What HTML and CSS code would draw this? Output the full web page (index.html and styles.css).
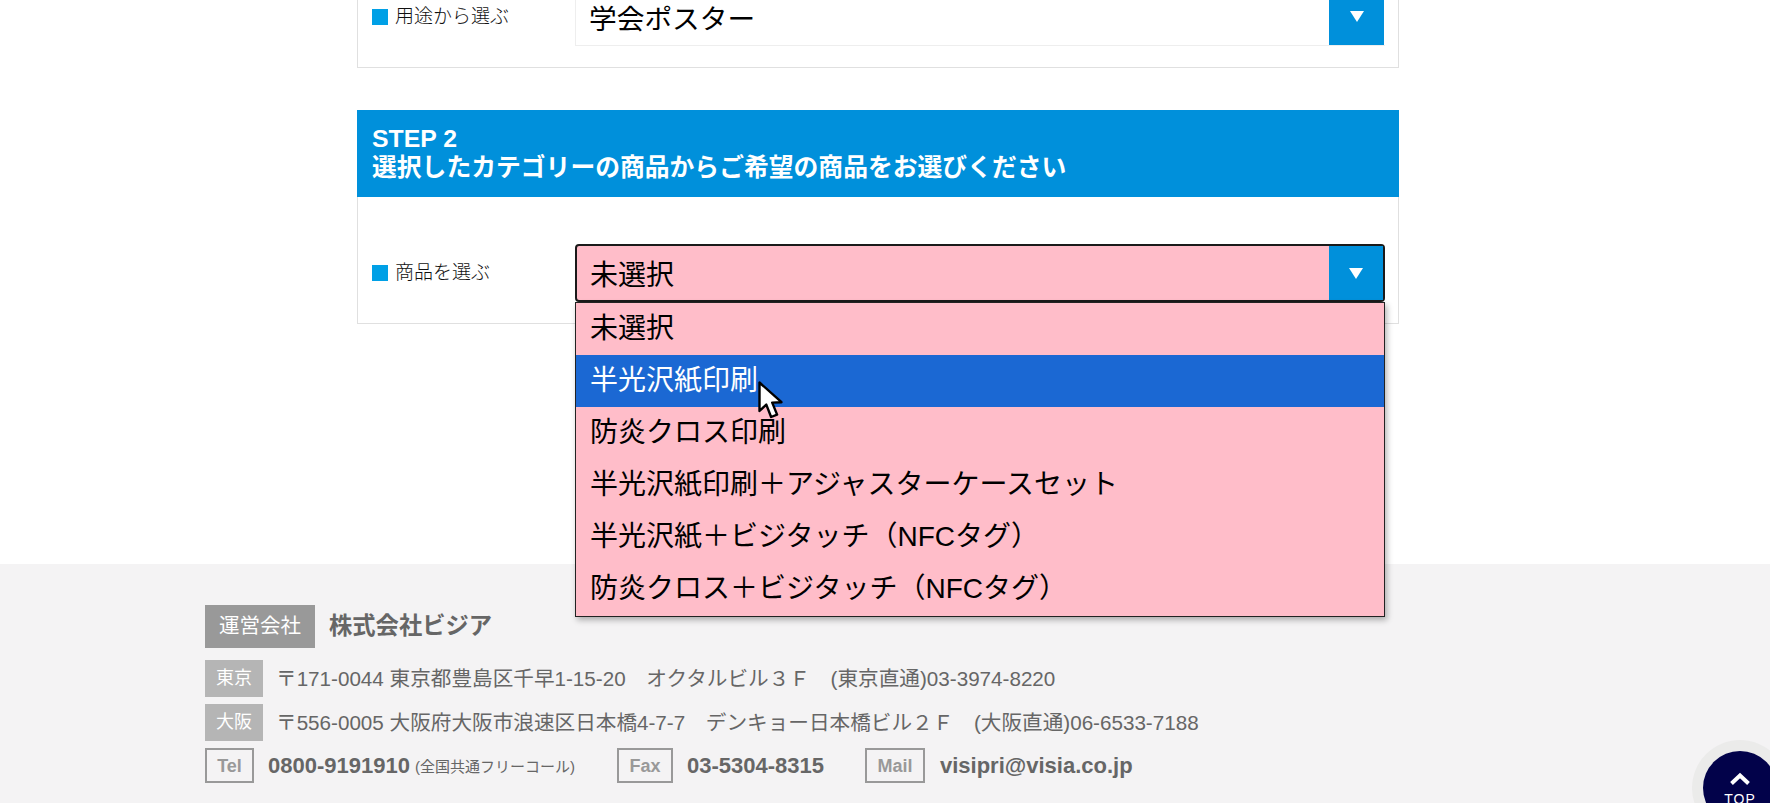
FILE: index.html
```html
<!DOCTYPE html>
<html lang="ja">
<head>
<meta charset="utf-8">
<title>商品を選ぶ</title>
<link rel="stylesheet" href="styles.css">
</head>
<body>
<div class="page">
  <main class="wrap">
    <section class="card card-first">
      <div class="row">
        <div class="label">用途から選ぶ</div>
        <div class="select select-plain">
          <span class="select-text">学会ポスター</span>
          <span class="select-btn"><i class="tri"></i></span>
        </div>
      </div>
    </section>
    <section class="card card-second">
      <h2 class="step">STEP 2<br>選択したカテゴリーの商品からご希望の商品をお選びください</h2>
      <div class="row row-second">
        <div class="label">商品を選ぶ</div>
        <div class="select select-open">
          <span class="select-text">未選択</span>
          <span class="select-btn"><i class="tri"></i></span>
          <ul class="menu">
            <li>未選択</li>
            <li class="on">半光沢紙印刷</li>
            <li>防炎クロス印刷</li>
            <li>半光沢紙印刷＋アジャスターケースセット</li>
            <li>半光沢紙＋ビジタッチ（NFCタグ）</li>
            <li>防炎クロス＋ビジタッチ（NFCタグ）</li>
          </ul>
          <svg class="cursor" width="25" height="38" viewBox="0 0 25 38"><path d="M1.500 1.500V30l6.800-6.400 4.800 12.400 6-2.400-4.900-12 9.300-.4z" fill="#fff" stroke="#000" stroke-width="2.400" stroke-linejoin="round"/></svg>
        </div>
      </div>
    </section>
  </main>
  <footer class="footer">
    <div class="footer-in">
      <div class="company"><span class="company-tag">運営会社</span><strong class="company-name">株式会社ビジア</strong></div>
      <div class="addr"><span class="city">東京</span><span>〒171-0044 東京都豊島区千早1-15-20　オクタルビル３Ｆ　(東京直通)03-3974-8220</span></div>
      <div class="addr"><span class="city">大阪</span><span>〒556-0005 大阪府大阪市浪速区日本橋4-7-7　デンキョー日本橋ビル２Ｆ　(大阪直通)06-6533-7188</span></div>
      <div class="contact">
        <span class="box box-tel">Tel</span><strong class="val">0800-9191910</strong><small class="note">(全国共通フリーコール)</small>
        <span class="box box-fax">Fax</span><strong class="val">03-5304-8315</strong>
        <span class="box box-mail">Mail</span><strong class="val">visipri@visia.co.jp</strong>
      </div>
    </div>
  </footer>
  <a class="top"><svg width="22" height="14" viewBox="0 0 22 14"><path d="M2.500 11.500 11 3.500l8.500 8" fill="none" stroke="#fff" stroke-width="4"/></svg><span>TOP</span></a>
</div>
</body>
</html>
```
FILE: styles.css
```css
* { box-sizing: border-box; }
html, body { margin: 0; padding: 0; background: #fff; }
body { font-family: "Liberation Sans", "Noto Sans CJK JP", sans-serif; color: #000; }
.page { position: relative; width: 1770px; height: 803px; overflow: hidden; }

.wrap { width: 1042px; margin-left: 357px; }
.card { border: 1px solid #e0e0e0; background: #fff; }
.card-first { border-top: 0; margin-top: -12px; padding-bottom: 21px; }
.card-second { margin-top: 42px; border-top: 0; padding-bottom: 21px; }
.row { display: flex; align-items: center; padding: 0 13px 0 14px; }
.row-second { padding-top: 47px; }
.label { width: 203px; flex: none; display: flex; align-items: center; font-size: 19px; font-weight: 300; line-height: 24px; color: #111; }
.label::before { content: ""; width: 16px; height: 16px; background: #00a0e6; margin-right: 7px; flex: none; }

.select { position: relative; flex: 1; height: 58px; display: flex; align-items: stretch; justify-content: space-between; background: #fff; }
.select-plain { border-left: 1px solid #eee; border-bottom: 1px solid #eee; }
.select-plain .select-text { line-height: 64px; font-size: 27.700px; }
.select-open { background: #ffbdc9; border: 2px solid #1a1a1a; border-radius: 4px; }
.select-text { font-size: 28px; line-height: 60px; padding-left: 13px; }
.select-btn { width: 55px; background: #0090db; display: flex; align-items: center; justify-content: center; margin-right: 1px; }
.select-open .select-btn { margin-right: 0; width: 54px; }
.tri { width: 0; height: 0; border-left: 7px solid transparent; border-right: 7px solid transparent; border-top: 11px solid #fff; }

.step { background: #0090db; color: #fff; font-size: 24.800px; line-height: 29px; font-weight: 700; padding: 14px 15px 15px; margin: 0 -1px; }

.menu { position: absolute; left: -2px; right: -2px; top: 56px; margin: 0; padding: 0 0 1px; list-style: none; background: #ffbdc9; border: 1px solid #222; box-shadow: 2px 3px 6px rgba(0,0,0,.3); z-index: 2; }
.menu li { height: 52px; line-height: 52px; font-size: 28px; padding-left: 14px; white-space: nowrap; }
.menu .on { background: #1b68d3; color: #fff; }
.cursor { position: absolute; left: 181px; top: 135px; z-index: 3; }

.footer { margin-top: 240px; height: 240px; background: #f4f3f4; padding-top: 41px; color: #666; }
.footer-in { width: 1360px; margin: 0 auto; }
.company { display: flex; align-items: center; height: 43px; }
.company-tag { width: 110px; height: 43px; line-height: 41px; text-align: center; background: #999; color: #fff; font-size: 20.500px; }
.company-name { margin: 0 0 6px 14px; font-size: 23.300px; }
.addr { display: flex; align-items: center; height: 37px; margin-top: 7px; font-size: 20.640px; white-space: nowrap; }
.addr span:last-child { position: relative; top: -2px; }
.company + .addr { margin-top: 12px; }
.city { width: 58px; height: 37px; line-height: 37px; text-align: center; background: #b5b5b5; color: #fff; font-size: 18px; margin-right: 13px; }
.contact { display: flex; align-items: center; height: 35px; margin-top: 7px; white-space: nowrap; }
.box { height: 35px; line-height: 33px; border: 2px solid #999; color: #999; font-size: 18px; font-weight: 700; text-align: center; margin-right: 14px; }
.box-tel { width: 49px; }
.box-fax { width: 56px; margin-left: 42px; }
.box-mail { width: 60px; margin-left: 41px; margin-right: 15px; }
.val { font-size: 22px; }
.note { font-size: 15px; margin-left: 5px; }

.top { position: absolute; left: 1692px; top: 740px; width: 96px; height: 96px; border-radius: 50%; background: #ebebea; display: block; }
.top::before { content: ""; position: absolute; inset: 11px; border-radius: 50%; background: #02024a; }
.top svg { position: absolute; left: 37px; top: 32px; }
.top span { position: absolute; left: 0; width: 96px; top: 51px; text-align: center; color: #fff; font-size: 14px; letter-spacing: 1px; }
```
